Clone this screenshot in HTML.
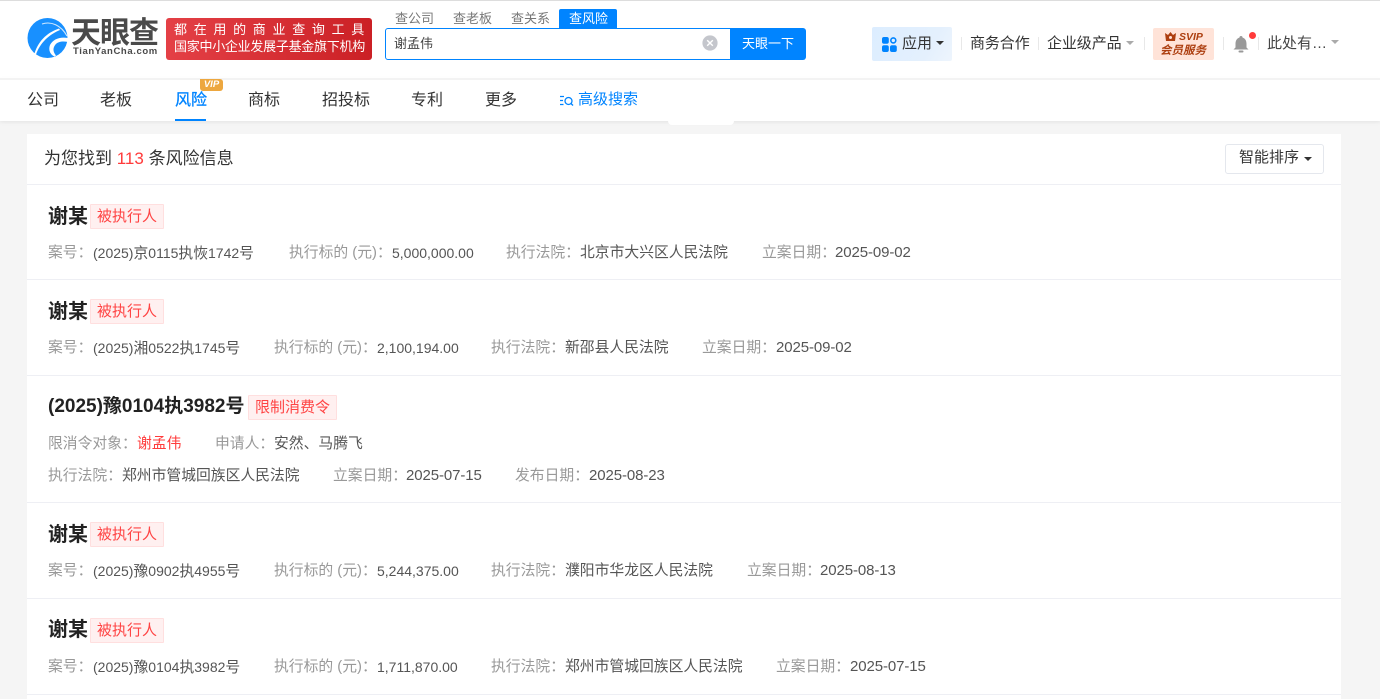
<!DOCTYPE html>
<html lang="zh"><head><meta charset="utf-8"><title>天眼查</title>
<style>
html,body{margin:0;padding:0}
body{width:1380px;height:699px;overflow:hidden;background:#f5f5f5;position:relative;font-family:"Liberation Sans","Noto Sans CJK SC",sans-serif;color:#333}
.a{position:absolute;white-space:nowrap}
.m{position:absolute;white-space:nowrap;font-size:14.800px;line-height:20px;color:#555;margin-top:2px}
.m i{font-style:normal;color:#999}
.m u{text-decoration:none;font-size:14px}
.m s{text-decoration:none;font-size:15px;letter-spacing:-.1px}
.t{position:absolute;white-space:nowrap;font-size:20px;line-height:28px;font-weight:700;color:#222;margin-top:1px}
.g{position:absolute;height:23px;line-height:23px;background:#fff0f0;border:1px solid #ffdfdf;color:#ff4444;font-size:15px;text-align:center;border-radius:1px}
.l{position:absolute;left:27px;width:1314px;height:1px;background:#eeeff4}
.n{position:absolute;top:91px;font-size:16px;line-height:20px;white-space:nowrap;color:#333}
.s{position:absolute;top:10px;font-size:13px;line-height:17px;color:#777;white-space:nowrap}
.h{position:absolute;top:34px;font-size:15px;line-height:20px;color:#333;white-space:nowrap}
.d{position:absolute;top:37px;width:1px;height:13px;background:#e8e8e8}
.c{position:absolute;width:0;height:0;border-left:4px solid transparent;border-right:4px solid transparent;border-top:4px solid #aaa}
</style></head><body>
<div class="a" style="left:0;top:0;width:1380px;height:79px;background:#fff;border-top:1px solid #ddd;box-sizing:border-box"></div>
<div class="a" style="left:0;top:79px;width:1380px;height:42px;background:#fff;box-shadow:0 1px 4px rgba(0,0,0,.08)"></div>
<div class="a" style="left:0;top:78px;width:1380px;height:2px;background:#f3f3f3"></div>

<svg class="a" style="left:27px;top:18px" width="41" height="41" viewBox="0 0 41 41">
<circle cx="20.500" cy="20" r="20" fill="#1890ff"/>
<path d="M15 6C24 3 34 7 40 18" stroke="#fff" stroke-width="1.100" fill="none" opacity=".8"/>
<path d="M32 10.500C22 14 12 21 7.500 35.500L9 36.500C13 25 22 16.500 33 12Z" fill="#fff"/>
<path d="M41 20C33 18.500 26 21 23 27C21 32 23.500 37 27.500 38.500L29 37.500C26 34 25.500 30 28.500 26.500C31 23.500 36 23 41 24Z" fill="#fff"/>
</svg>
<div class="a" style="left:71px;top:15px;font-size:30px;line-height:38px;font-weight:700;color:#4a4a4a;letter-spacing:-1px">天眼查</div>
<div class="a" style="left:73px;top:46px;font-size:9.500px;line-height:12px;font-weight:700;color:#4a4a4a;letter-spacing:.6px">TianYanCha.com</div>

<div class="a" style="left:166px;top:18px;width:206px;height:42px;border-radius:3px;background:linear-gradient(90deg,#e44046,#cb2025)"></div>
<div class="a" style="left:174px;top:21px;font-size:13px;line-height:18px;color:#fff;letter-spacing:6.700px">都在用的商业查询工具</div>
<div class="a" style="left:174px;top:38px;font-size:13px;line-height:18px;color:#fff;letter-spacing:-.27px">国家中小企业发展子基金旗下机构</div>

<div class="s" style="left:395px">查公司</div>
<div class="s" style="left:453px">查老板</div>
<div class="s" style="left:511px">查关系</div>
<div class="a" style="left:559px;top:9px;width:58px;height:19px;background:#0084ff;border-radius:2px 2px 0 0"></div>
<div class="s" style="left:569px;color:#fff">查风险</div>
<div class="a" style="left:385px;top:28px;width:346px;height:32px;border:1px solid #0084ff;border-radius:3px 0 0 3px;box-sizing:border-box;background:#fff"></div>
<div class="a" style="left:394px;top:35px;font-size:13px;line-height:17px;color:#444">谢孟伟</div>
<svg class="a" style="left:702px;top:35px" width="16" height="16" viewBox="0 0 16 16"><circle cx="8" cy="8" r="7.600" fill="#c4c6cc"/><path d="M5.200 5.200L10.800 10.800M10.800 5.200L5.200 10.800" stroke="#fff" stroke-width="1.400"/></svg>
<div class="a" style="left:730px;top:28px;width:76px;height:32px;background:#0084ff;border-radius:0 3px 3px 0;color:#fff;font-size:13px;line-height:31px;text-align:center">天眼一下</div>

<div class="a" style="left:872px;top:27px;width:80px;height:34px;border-radius:2px;background:linear-gradient(120deg,#dcedff,#e4f0fd 70%,#eef5fd)"></div>
<svg class="a" style="left:882px;top:37px" width="15" height="15" viewBox="0 0 15 15"><rect x="0" y="0" width="6.800" height="6.800" rx="2" fill="#0084ff"/><circle cx="11.300" cy="3.400" r="2.500" fill="none" stroke="#0084ff" stroke-width="1.600"/><rect x="0" y="8.200" width="6.800" height="6.800" rx="2" fill="#0084ff"/><rect x="8" y="8.200" width="6.800" height="6.800" rx="2" fill="#0084ff"/></svg>
<div class="h" style="left:902px">应用</div>
<div class="c" style="left:936px;top:41px;border-top-color:#333"></div>
<div class="d" style="left:961px"></div>
<div class="h" style="left:970px;letter-spacing:-.1px">商务合作</div>
<div class="d" style="left:1038px"></div>
<div class="h" style="left:1047px;letter-spacing:-.1px">企业级产品</div>
<div class="c" style="left:1126px;top:41px"></div>
<div class="d" style="left:1144px"></div>
<div class="a" style="left:1153px;top:28px;width:61px;height:32px;border-radius:2px;background:#ffe3d8"></div>
<svg class="a" style="left:1165px;top:32px" width="11" height="10" viewBox="0 0 11 10"><path d="M0 1L3 3L5.500 0L8 3L11 1L10 9H1Z" fill="#ad3f10"/><circle cx="5.500" cy="5.500" r="1.500" fill="#ffe3d8"/></svg>
<div class="a" style="left:1179px;top:30px;font-size:10.500px;line-height:14px;font-weight:700;font-style:italic;color:#ad3f10">SVIP</div>
<div class="a" style="left:1160px;top:44px;font-size:11.500px;line-height:14px;font-weight:700;font-style:italic;color:#ad3f10">会员服务</div>
<div class="d" style="left:1223px"></div>
<svg class="a" style="left:1233px;top:35px" width="16" height="18" viewBox="0 0 16 17"><path d="M8 0.500C9 0.500 9.500 1 9.500 2C12.500 3 13.500 5.500 13.500 8.500V12L15.500 14H0.500L2.500 12V8.500C2.500 5.500 3.500 3 6.500 2C6.500 1 7 0.500 8 0.500Z" fill="#999"/><rect x="5.500" y="15" width="5" height="2" rx="1" fill="#999"/></svg>
<div class="a" style="left:1249px;top:32px;width:7px;height:7px;border-radius:50%;background:#ff3b3b"></div>
<div class="d" style="left:1258px"></div>
<div class="h" style="left:1267px;color:#444">此处有…</div>
<div class="c" style="left:1331px;top:40px"></div>

<div class="n" style="left:27px">公司</div>
<div class="n" style="left:100px">老板</div>
<div class="n" style="left:175px;color:#0084ff;-webkit-text-stroke:.3px #0084ff">风险</div>
<div class="a" style="left:175px;top:119px;width:31px;height:2px;background:#0084ff"></div>
<div class="a" style="left:200px;top:79px;width:23px;height:12px;background:#eda73f;border-radius:0 3px 3px 3px;color:#fff;font-size:9.500px;line-height:12px;font-weight:700;font-style:italic;text-align:center">VIP</div>
<div class="n" style="left:248px">商标</div>
<div class="n" style="left:322px">招投标</div>
<div class="n" style="left:411px">专利</div>
<div class="n" style="left:485px">更多</div>
<svg class="a" style="left:559px;top:94px" width="15" height="14" viewBox="0 0 15 14"><path d="M1 2.500H5M1 6.500H4M1 10.500H4.500" stroke="#0084ff" stroke-width="1.300" fill="none"/><circle cx="9.500" cy="7" r="3.500" fill="none" stroke="#0084ff" stroke-width="1.300"/><path d="M12 9.500L14 11.500" stroke="#0084ff" stroke-width="1.300"/></svg>
<div class="a" style="left:578px;top:90px;font-size:15px;line-height:20px;color:#0084ff">高级搜索</div>
<div class="a" style="left:668px;top:121px;width:66px;height:4px;background:#fff;border-radius:0 0 4px 4px"></div>

<div class="a" style="left:27px;top:134px;width:1314px;height:565px;background:#fff"></div>
<div class="a" style="left:44px;top:148px;font-size:17px;line-height:22px;color:#333">为您找到 <span style="color:#ff3b3b">113</span> 条风险信息</div>
<div class="a" style="left:1225px;top:144px;width:99px;height:30px;box-sizing:border-box;border:1px solid #e4e7ed;border-radius:3px;font-size:15px;line-height:26px;padding-left:13px;color:#333">智能排序</div>
<div class="c" style="left:1304px;top:157px;border-top-color:#333"></div>
<div class="l" style="top:184px"></div>

<div class="t" style="left:48px;top:202px">谢某</div>
<div class="g" style="left:90px;top:204px;width:72px">被执行人</div>
<div class="m" style="left:48px;top:241px"><i>案号：</i></div><div class="m" style="left:93px;top:241px"><u>(2025)</u>京<u>0115</u>执恢<u>1742</u>号</div>
<div class="m" style="left:289px;top:241px"><i>执行标的 (元)：</i></div><div class="m" style="left:392px;top:241px"><u>5,000,000.00</u></div>
<div class="m" style="left:506px;top:241px"><i>执行法院：</i></div><div class="m" style="left:580px;top:241px">北京市大兴区人民法院</div>
<div class="m" style="left:762px;top:241px"><i>立案日期：</i></div><div class="m" style="left:835px;top:241px"><s>2025-09-02</s></div>
<div class="l" style="top:279px"></div>

<div class="t" style="left:48px;top:297px">谢某</div>
<div class="g" style="left:90px;top:299px;width:72px">被执行人</div>
<div class="m" style="left:48px;top:336px"><i>案号：</i></div><div class="m" style="left:93px;top:336px"><u>(2025)</u>湘<u>0522</u>执<u>1745</u>号</div>
<div class="m" style="left:274px;top:336px"><i>执行标的 (元)：</i></div><div class="m" style="left:377px;top:336px"><u>2,100,194.00</u></div>
<div class="m" style="left:491px;top:336px"><i>执行法院：</i></div><div class="m" style="left:565px;top:336px">新邵县人民法院</div>
<div class="m" style="left:702px;top:336px"><i>立案日期：</i></div><div class="m" style="left:776px;top:336px"><s>2025-09-02</s></div>
<div class="l" style="top:375px"></div>

<div class="t" style="left:48px;top:392px;font-size:19px">(2025)豫0104执3982号</div>
<div class="g" style="left:248px;top:395px;width:87px">限制消费令</div>
<div class="m" style="left:48px;top:432px"><i>限消令对象：</i></div><div class="m" style="left:137px;top:432px;color:#ff3b3b">谢孟伟</div>
<div class="m" style="left:215px;top:432px"><i>申请人：</i></div><div class="m" style="left:274px;top:432px">安然、马腾飞</div>
<div class="m" style="left:48px;top:464px"><i>执行法院：</i></div><div class="m" style="left:122px;top:464px">郑州市管城回族区人民法院</div>
<div class="m" style="left:333px;top:464px"><i>立案日期：</i></div><div class="m" style="left:406px;top:464px"><s>2025-07-15</s></div>
<div class="m" style="left:515px;top:464px"><i>发布日期：</i></div><div class="m" style="left:589px;top:464px"><s>2025-08-23</s></div>
<div class="l" style="top:502px"></div>

<div class="t" style="left:48px;top:520px">谢某</div>
<div class="g" style="left:90px;top:522px;width:72px">被执行人</div>
<div class="m" style="left:48px;top:559px"><i>案号：</i></div><div class="m" style="left:93px;top:559px"><u>(2025)</u>豫<u>0902</u>执<u>4955</u>号</div>
<div class="m" style="left:274px;top:559px"><i>执行标的 (元)：</i></div><div class="m" style="left:377px;top:559px"><u>5,244,375.00</u></div>
<div class="m" style="left:491px;top:559px"><i>执行法院：</i></div><div class="m" style="left:565px;top:559px">濮阳市华龙区人民法院</div>
<div class="m" style="left:747px;top:559px"><i>立案日期：</i></div><div class="m" style="left:820px;top:559px"><s>2025-08-13</s></div>
<div class="l" style="top:598px"></div>

<div class="t" style="left:48px;top:615px">谢某</div>
<div class="g" style="left:90px;top:618px;width:72px">被执行人</div>
<div class="m" style="left:48px;top:655px"><i>案号：</i></div><div class="m" style="left:93px;top:655px"><u>(2025)</u>豫<u>0104</u>执<u>3982</u>号</div>
<div class="m" style="left:274px;top:655px"><i>执行标的 (元)：</i></div><div class="m" style="left:377px;top:655px"><u>1,711,870.00</u></div>
<div class="m" style="left:491px;top:655px"><i>执行法院：</i></div><div class="m" style="left:565px;top:655px">郑州市管城回族区人民法院</div>
<div class="m" style="left:776px;top:655px"><i>立案日期：</i></div><div class="m" style="left:850px;top:655px"><s>2025-07-15</s></div>
<div class="l" style="top:694px"></div>
</body></html>
